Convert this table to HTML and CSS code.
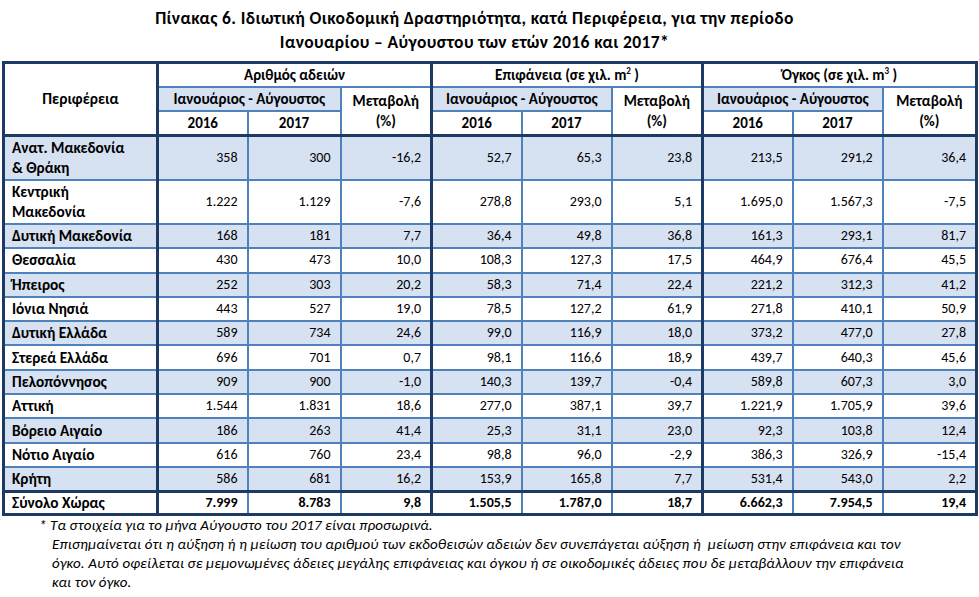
FILE: index.html
```html
<!DOCTYPE html>
<html lang="el">
<head>
    <meta charset="UTF-8">
    <meta name="viewport" content="width=device-width, initial-scale=1.0">
    <title>Πίνακας 6 - Ιδιωτική Οικοδομική Δραστηριότητα</title>
    <link rel="stylesheet" href="styles.css">
</head>
<body>
    <h1 class="title">Πίνακας 6. Ιδιωτική Οικοδομική Δραστηριότητα, κατά Περιφέρεια, για την περίοδο<br>Ιανουαρίου – Αύγουστου των ετών 2016 και 2017*</h1>

    <table class="stats">
        <colgroup>
            <col class="c-region">
            <col class="c-num"><col class="c-num2"><col class="c-chg">
            <col class="c-num"><col class="c-num"><col class="c-chg">
            <col class="c-num"><col class="c-num"><col class="c-last">
        </colgroup>
        <thead>
            <tr class="groups">
                <th rowspan="3" class="region-head">Περιφέρεια</th>
                <th colspan="3" class="sep">Αριθμός αδειών</th>
                <th colspan="3" class="sep">Επιφάνεια (σε χιλ. m<sup>2</sup> )</th>
                <th colspan="3">Όγκος (σε χιλ. m<sup>3</sup> )</th>
            </tr>
            <tr class="period">
                <th colspan="2">Ιανουάριος - Αύγουστος</th>
                <th rowspan="2" class="change sep">Μεταβολή<br>(%)</th>
                <th colspan="2">Ιανουάριος - Αύγουστος</th>
                <th rowspan="2" class="change sep">Μεταβολή<br>(%)</th>
                <th colspan="2">Ιανουάριος - Αύγουστος</th>
                <th rowspan="2" class="change">Μεταβολή<br>(%)</th>
            </tr>
            <tr class="years">
                <th>2016</th><th>2017</th>
                <th>2016</th><th>2017</th>
                <th>2016</th><th>2017</th>
            </tr>
        </thead>
        <tbody>
            <tr class="shade tall"><td>Ανατ. Μακεδονία<br>&amp; Θράκη</td><td>358</td><td>300</td><td class="sep">-16,2</td><td>52,7</td><td>65,3</td><td class="sep">23,8</td><td>213,5</td><td>291,2</td><td>36,4</td></tr>
            <tr class="tall"><td>Κεντρική<br>Μακεδονία</td><td>1.222</td><td>1.129</td><td class="sep">-7,6</td><td>278,8</td><td>293,0</td><td class="sep">5,1</td><td>1.695,0</td><td>1.567,3</td><td>-7,5</td></tr>
            <tr class="shade"><td>Δυτική Μακεδονία</td><td>168</td><td>181</td><td class="sep">7,7</td><td>36,4</td><td>49,8</td><td class="sep">36,8</td><td>161,3</td><td>293,1</td><td>81,7</td></tr>
            <tr><td>Θεσσαλία</td><td>430</td><td>473</td><td class="sep">10,0</td><td>108,3</td><td>127,3</td><td class="sep">17,5</td><td>464,9</td><td>676,4</td><td>45,5</td></tr>
            <tr class="shade"><td>Ήπειρος</td><td>252</td><td>303</td><td class="sep">20,2</td><td>58,3</td><td>71,4</td><td class="sep">22,4</td><td>221,2</td><td>312,3</td><td>41,2</td></tr>
            <tr><td>Ιόνια Νησιά</td><td>443</td><td>527</td><td class="sep">19,0</td><td>78,5</td><td>127,2</td><td class="sep">61,9</td><td>271,8</td><td>410,1</td><td>50,9</td></tr>
            <tr class="shade"><td>Δυτική Ελλάδα</td><td>589</td><td>734</td><td class="sep">24,6</td><td>99,0</td><td>116,9</td><td class="sep">18,0</td><td>373,2</td><td>477,0</td><td>27,8</td></tr>
            <tr><td>Στερεά Ελλάδα</td><td>696</td><td>701</td><td class="sep">0,7</td><td>98,1</td><td>116,6</td><td class="sep">18,9</td><td>439,7</td><td>640,3</td><td>45,6</td></tr>
            <tr class="shade"><td>Πελοπόννησος</td><td>909</td><td>900</td><td class="sep">-1,0</td><td>140,3</td><td>139,7</td><td class="sep">-0,4</td><td>589,8</td><td>607,3</td><td>3,0</td></tr>
            <tr><td>Αττική</td><td>1.544</td><td>1.831</td><td class="sep">18,6</td><td>277,0</td><td>387,1</td><td class="sep">39,7</td><td>1.221,9</td><td>1.705,9</td><td>39,6</td></tr>
            <tr class="shade"><td>Βόρειο Αιγαίο</td><td>186</td><td>263</td><td class="sep">41,4</td><td>25,3</td><td>31,1</td><td class="sep">23,0</td><td>92,3</td><td>103,8</td><td>12,4</td></tr>
            <tr><td>Νότιο Αιγαίο</td><td>616</td><td>760</td><td class="sep">23,4</td><td>98,8</td><td>96,0</td><td class="sep">-2,9</td><td>386,3</td><td>326,9</td><td>-15,4</td></tr>
            <tr class="shade"><td>Κρήτη</td><td>586</td><td>681</td><td class="sep">16,2</td><td>153,9</td><td>165,8</td><td class="sep">7,7</td><td>531,4</td><td>543,0</td><td>2,2</td></tr>
            <tr class="total"><td>Σύνολο Χώρας</td><td>7.999</td><td>8.783</td><td class="sep">9,8</td><td>1.505,5</td><td>1.787,0</td><td class="sep">18,7</td><td>6.662,3</td><td>7.954,5</td><td>19,4</td></tr>
        </tbody>
    </table>

    <div class="notes">
        <p class="note-star">* Τα στοιχεία για το μήνα Αύγουστο του 2017 είναι προσωρινά.</p>
        <p class="note-text">Επισημαίνεται ότι η αύξηση ή η μείωση του αριθμού των εκδοθεισών αδειών δεν συνεπάγεται αύξηση ή&nbsp; μείωση στην επιφάνεια και τον<br>όγκο. Αυτό οφείλεται σε μεμονωμένες άδειες μεγάλης επιφάνειας και όγκου ή σε οικοδομικές άδειες που δε μεταβάλλουν την επιφάνεια<br>και τον όγκο.</p>
    </div>
</body>
</html>
```

FILE: styles.css
```css
body {
    font-family: Carlito, Lato, sans-serif;
    background-color: #ffffff;
    color: #000000;
    margin: 0;
    padding: 0 2px;
}
.title {
    font-size: 17.5px;
    font-weight: bold;
    letter-spacing: 0.4px;
    line-height: 24px;
    text-align: center;
    margin: 6px 0 0 0;
    padding-right: 30px;
    height: 55px;
}
.stats {
    width: 973px;
    table-layout: fixed;
    border-collapse: collapse;
    border: 3px solid #1c3a63;
    font-size: 14px;
}
.c-region { width: 154px; }
.c-num { width: 90px; }
.c-num2 { width: 93px; }
.c-chg { width: 91px; }
.c-last { width: 94px; }
.stats th,
.stats td {
    border: 2px solid #4f81bd;
    padding: 0 9px;
    line-height: 20px;
}
.stats th {
    font-size: 15px;
    font-weight: bold;
    text-align: center;
    background-color: #ffffff;
}
.stats th.region-head {
    font-size: 15.5px;
    border-right: 3px solid #1c3a63;
    border-bottom: 3px solid #1c3a63;
}
.stats .sep {
    border-right: 3px solid #1c3a63;
}
.groups th {
    height: 22px;
}
.groups th sup {
    font-size: 9px;
    line-height: 0;
}
.period th {
    height: 22px;
    background-color: #d6e1f1;
}
.period th.change {
    background-color: #ffffff;
    border-bottom: 3px solid #1c3a63;
}
.years th {
    height: 22px;
    border-bottom: 3px solid #1c3a63;
}
.stats td {
    text-align: right;
    height: 22.3px;
}
.stats td:first-child {
    text-align: left;
    font-size: 15.3px;
    font-weight: bold;
    padding-left: 7px;
    border-right: 3px solid #1c3a63;
}
.stats tr.tall td {
    height: 42px;
}
.stats tr.shade td {
    background-color: #d6e1f1;
}
.stats tr.total td {
    font-weight: bold;
    border-top: 3px solid #1c3a63;
    height: 20px;
}
.notes {
    font-style: italic;
    font-size: 15px;
    letter-spacing: 0.1px;
    line-height: 19px;
}
.notes p {
    margin: 0;
}
.note-star {
    padding-left: 37px;
}
.note-text {
    padding-left: 50px;
    margin-top: 5px;
}
```
